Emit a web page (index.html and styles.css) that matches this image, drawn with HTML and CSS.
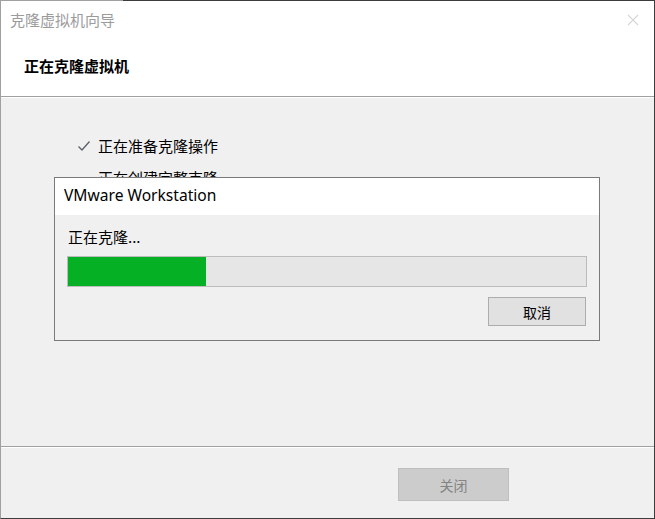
FILE: index.html
```html
<!DOCTYPE html>
<html lang="zh-CN">
<head>
<meta charset="utf-8">
<title>克隆虚拟机向导</title>
<link rel="stylesheet" href="styles.css">
</head>
<body>
<div class="window">
  <div class="titlebar">
    <span class="title">克隆虚拟机向导</span>
    <svg class="close-x" width="12" height="12" viewBox="0 0 12 12"><path d="M1 1L11 11M11 1L1 11" stroke="#d6d6d6" stroke-width="1.1"/></svg>
  </div>
  <div class="header">正在克隆虚拟机</div>
  <div class="sep"></div>
  <div class="content">
    <ul class="steps">
      <li class="step">
        <svg class="check" width="14" height="12" viewBox="0 0 14 12"><path d="M1.5 6.5L5 10L12.5 1.5" fill="none" stroke="#5a6068" stroke-width="1.3"/></svg>
        <span>正在准备克隆操作</span>
      </li>
      <li class="step">
        <span class="check-space"></span>
        <span>正在创建完整克隆</span>
      </li>
    </ul>
    <div class="dialog">
      <div class="dlg-title">VMware Workstation</div>
      <div class="dlg-body">
        <div class="dlg-msg">正在克隆...</div>
        <div class="progress"><div class="progress-fill" style="width:138px"></div></div>
        <div class="dlg-actions"><button class="btn">取消</button></div>
      </div>
    </div>
  </div>
  <div class="sep"></div>
  <div class="footer">
    <button class="btn btn-disabled">关闭</button>
  </div>
</div>
</body>
</html>
```
FILE: styles.css
```css
html, body {
  margin: 0;
  padding: 0;
  background: #ffffff;
}
body {
  font-family: "Noto Sans CJK SC", "Noto Sans", sans-serif;
  font-size: 15px;
  color: #000;
}
.window {
  box-sizing: border-box;
  width: 655px;
  height: 519px;
  border-left: 1px solid #a0a0a0;
  border-top: 1px solid #a0a0a0;
  border-right: 1px solid #3c3c3c;
  border-bottom: 1px solid #3c3c3c;
  display: flex;
  flex-direction: column;
  background: #f0f0f0;
  position: relative;
}
.window::before {
  content: "";
  position: absolute;
  top: -1px;
  left: 122px;
  right: -1px;
  height: 1px;
  background: #3c3c3c;
}
.titlebar {
  height: 37px;
  background: #fff;
  display: flex;
  align-items: center;
  justify-content: space-between;
  padding: 0 15px 0 9px;
}
.title {
  color: #9b9b9b;
  font-size: 15px;
  line-height: 1;
}
.close-x {
  display: block;
}
.header {
  height: 58px;
  background: #fff;
  font-weight: bold;
  font-size: 15px;
  line-height: 1;
  padding-left: 23px;
  display: flex;
  align-items: center;
  padding-bottom: 3px;
  box-sizing: border-box;
}
.sep {
  height: 1px;
  background: #a0a0a0;
  border-bottom: 1px solid #ffffff;
}
.content {
  flex: 1;
  position: relative;
  background: #f0f0f0;
}
.steps {
  list-style: none;
  margin: 0;
  padding: 39px 0 0 76px;
}
.step {
  display: flex;
  align-items: center;
  gap: 7px;
  height: 17px;
  margin-bottom: 15px;
  line-height: 1;
}
.check {
  display: block;
  width: 14px;
  height: 12px;
}
.check-space {
  display: block;
  width: 14px;
}
.dialog {
  position: absolute;
  left: 53px;
  top: 79px;
  width: 546px;
  height: 164px;
  box-sizing: border-box;
  border: 1px solid #7a7a7a;
  background: #f0f0f0;
  display: flex;
  flex-direction: column;
}
.dlg-title {
  height: 37px;
  background: #fff;
  font-family: "Noto Sans", "Open Sans", sans-serif;
  font-size: 15.6px;
  line-height: 1;
  display: flex;
  align-items: center;
  padding-left: 9px;
  padding-bottom: 1px;
  box-sizing: border-box;
}
.dlg-body {
  padding: 14px 12px 0 12px;
}
.dlg-msg {
  line-height: 1;
  height: 16px;
  padding-left: 1px;
}
.progress {
  margin-top: 11px;
  height: 31px;
  box-sizing: border-box;
  border: 1px solid #bcbcbc;
  background: #e6e6e6;
  width: 520px;
}
.progress-fill {
  height: 100%;
  background: #06b025;
}
.dlg-actions {
  display: flex;
  justify-content: flex-end;
  margin-top: 10px;
  padding-right: 1px;
}
.btn {
  width: 98px;
  height: 29px;
  box-sizing: border-box;
  border: 1px solid #adadad;
  background: #e1e1e1;
  font-family: "Noto Sans CJK SC", sans-serif;
  font-size: 14px;
  color: #000;
  padding: 0;
  line-height: 1;
}
.footer {
  height: 70px;
  display: flex;
  justify-content: flex-end;
  padding: 20px 145px 0 0;
  box-sizing: border-box;
}
.btn-disabled {
  width: 111px;
  height: 33px;
  background: #cccccc;
  border-color: #bfbfbf;
  color: #838383;
}
```
